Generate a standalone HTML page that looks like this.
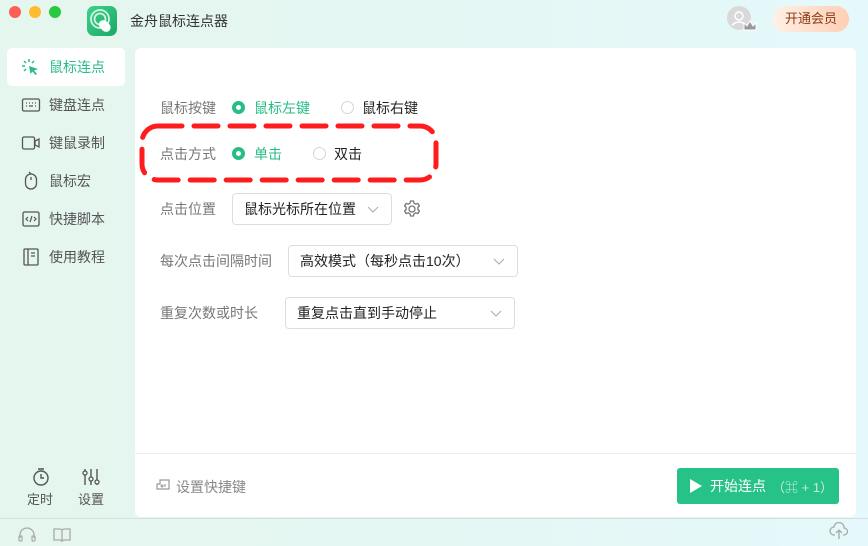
<!DOCTYPE html>
<html><head><meta charset="utf-8"><style>
*{margin:0;padding:0;box-sizing:border-box}
body{width:868px;height:546px;overflow:hidden;font-family:"Liberation Sans","Noto Sans CJK SC",sans-serif;background:linear-gradient(90deg,#e5f6ee 0%,#e5f7f3 50%,#e5f8fb 100%);position:relative;font-size:14px;color:#222}
.abs{position:absolute}
.t{line-height:16px}
.dot{width:12px;height:12px;border-radius:50%;top:6px}
.nav{position:absolute;left:7px;width:118px;height:38px;display:flex;align-items:center;padding-left:14px;gap:8px;color:#555;font-size:14px}
.nav svg{width:20px;height:20px}
.card{left:135px;top:48px;width:721px;height:469px;background:#fff;border-radius:6px}
.lbl{color:#777;font-size:14px}
.radio{width:13px;height:13px;border-radius:50%;border:1px solid #d5d5d5;background:#fff}
.radio.on{border:4px solid #27bd85}
.sel{position:absolute;height:32px;border:1px solid #ddd;border-radius:4px;padding-left:11px;display:flex;align-items:center;font-size:14px;color:#222}
.chev{position:absolute;right:12px;top:9px}
</style></head><body>
<div class="abs dot" style="left:9px;background:#fe5f57"></div>
<div class="abs dot" style="left:29px;background:#febc2e"></div>
<div class="abs dot" style="left:49px;background:#28c840"></div>
<div class="abs" style="left:87px;top:6px;width:30px;height:30px;border-radius:7px;background:linear-gradient(135deg,#3ed28a,#18a864)">
<svg width="30" height="30" viewBox="0 0 30 30"><circle cx="13" cy="13" r="9" fill="none" stroke="#fff" stroke-width="1.8" opacity=".8"/><circle cx="13" cy="13" r="5.5" fill="none" stroke="#fff" stroke-width="1.8" opacity=".8"/><rect x="13" y="14" width="9" height="13" rx="4.5" transform="rotate(-45 17 20)" fill="#fff"/></svg></div>
<div class="abs" style="left:130px;top:11px;font-size:14px;color:#333">金舟鼠标连点器</div>
<div class="abs" style="left:727px;top:6px;width:24px;height:24px;border-radius:50%;background:#d9d9d9">
<svg width="24" height="24"><circle cx="12" cy="10" r="4" fill="none" stroke="#fff" stroke-width="1.5"/><path d="M5 19 Q12 13 19 19" fill="none" stroke="#fff" stroke-width="1.5"/></svg></div>
<svg class="abs" style="left:743px;top:20px" width="14" height="11"><path d="M1 3l3 3 3-5 3 5 3-3v7H1z" fill="#999" stroke="#fff" stroke-width="1"/></svg>
<div class="abs" style="left:773px;top:6px;width:76px;height:26px;border-radius:13px;background:linear-gradient(90deg,#fff0e6,#ffcfb4);color:#8a3b12;font-size:13px;text-align:center;line-height:26px">开通会员</div>

<div class="abs" style="left:7px;top:48px;width:118px;height:38px;background:#fff;border-radius:5px"></div>
<div class="nav" style="top:48px;color:#27bd85"><svg viewBox="0 0 20 20"><path d="M8 9 L17 12 L13 13.5 L16 17 L14.5 18 L11.5 14.5 L9.5 17 Z" fill="#27bd85"/><path d="M8 2v3M3 4l2 2M1 9h3M3 14l2-2M13 4l-2 2" stroke="#27bd85" stroke-width="1.5"/></svg>鼠标连点</div>
<div class="nav" style="top:86px"><svg viewBox="0 0 20 20"><rect x="1.5" y="4" width="17" height="12" rx="1.5" fill="none" stroke="#555" stroke-width="1.3"/><path d="M5 8h1M8 8h1M11 8h1M14 8h1M5 11h1M8 11h4M14 11h1" stroke="#555" stroke-width="1.3"/></svg>键盘连点</div>
<div class="nav" style="top:124px"><svg viewBox="0 0 20 20"><rect x="1.5" y="4" width="12" height="12" rx="1.5" fill="none" stroke="#555" stroke-width="1.3"/><path d="M14 8l4-2v8l-4-2z" fill="none" stroke="#555" stroke-width="1.3"/></svg>键鼠录制</div>
<div class="nav" style="top:162px"><svg viewBox="0 0 20 20"><rect x="4.5" y="3" width="11" height="15" rx="5.5" fill="none" stroke="#555" stroke-width="1.3"/><path d="M10 6v3M8 1l2 2" stroke="#555" stroke-width="1.3"/></svg>鼠标宏</div>
<div class="nav" style="top:200px"><svg viewBox="0 0 20 20"><rect x="2" y="3" width="16" height="14" rx="1.5" fill="none" stroke="#555" stroke-width="1.3"/><path d="M7 8l-2 2 2 2M13 8l2 2-2 2M11 7l-2 6" fill="none" stroke="#555" stroke-width="1.2"/></svg>快捷脚本</div>
<div class="nav" style="top:238px"><svg viewBox="0 0 20 20"><rect x="3" y="2" width="14" height="16" rx="1" fill="none" stroke="#555" stroke-width="1.3"/><path d="M7 2v16M10 6h4M10 9h4" stroke="#555" stroke-width="1.3"/></svg>使用教程</div>

<svg class="abs" style="left:31px;top:467px" width="20" height="20" viewBox="0 0 20 20"><circle cx="10" cy="11" r="7" fill="none" stroke="#555" stroke-width="1.4"/><path d="M10 7v4h3M7 2h6" stroke="#555" stroke-width="1.4" fill="none"/></svg>
<div class="abs" style="left:27px;top:489px;font-size:13px;color:#555">定时</div>
<svg class="abs" style="left:81px;top:467px" width="20" height="20" viewBox="0 0 20 20"><path d="M4 2v16M10 2v16M16 2v16" stroke="#555" stroke-width="1.4"/><circle cx="4" cy="6" r="2" fill="#e5f6ee" stroke="#555" stroke-width="1.3"/><circle cx="10" cy="12" r="2" fill="#e5f6ee" stroke="#555" stroke-width="1.3"/><circle cx="16" cy="15" r="2" fill="#e5f6ee" stroke="#555" stroke-width="1.3"/></svg>
<div class="abs" style="left:78px;top:489px;font-size:13px;color:#555">设置</div>

<div class="abs" style="left:0;top:518px;width:868px;height:1px;background:#d8dedb"></div>
<svg class="abs" style="left:17px;top:526px" width="20" height="18" viewBox="0 0 20 18"><path d="M3 12V9a7 7 0 0 1 14 0v3" fill="none" stroke="#aaa" stroke-width="1.3"/><rect x="2" y="10" width="3" height="5" rx="1" fill="none" stroke="#aaa" stroke-width="1.2"/><rect x="15" y="10" width="3" height="5" rx="1" fill="none" stroke="#aaa" stroke-width="1.2"/></svg>
<svg class="abs" style="left:52px;top:527px" width="20" height="16" viewBox="0 0 20 16"><path d="M2 2h6a2 2 0 0 1 2 2v11a2 2 0 0 0-2-2H2zM18 2h-6a2 2 0 0 0-2 2v11a2 2 0 0 1 2-2h6z" fill="none" stroke="#aaa" stroke-width="1.3"/></svg>
<svg class="abs" style="left:829px;top:522px" width="20" height="18" viewBox="0 0 20 18"><path d="M6 13H5a4 4 0 0 1 0-8 5 5 0 0 1 10 1 3.5 3.5 0 0 1 0 7h-1M10 8v9M7 11l3-3 3 3" fill="none" stroke="#aaa" stroke-width="1.3"/></svg>

<div class="abs card"></div>
<div class="abs" style="left:135px;top:453px;width:721px;height:1px;background:#eee"></div>

<div class="abs lbl t" style="left:160px;top:100px">鼠标按键</div>
<div class="abs radio on" style="left:232px;top:101px"></div>
<div class="abs t" style="left:254px;top:100px;color:#27bd85">鼠标左键</div>
<div class="abs radio" style="left:341px;top:101px"></div>
<div class="abs t" style="left:362px;top:100px">鼠标右键</div>

<div class="abs lbl t" style="left:160px;top:146px">点击方式</div>
<div class="abs radio on" style="left:232px;top:147px"></div>
<div class="abs t" style="left:254px;top:146px;color:#27bd85">单击</div>
<div class="abs radio" style="left:313px;top:147px"></div>
<div class="abs t" style="left:334px;top:146px">双击</div>
<svg class="abs" style="left:138px;top:123px" width="302" height="60"><rect x="4" y="3" width="294" height="54" rx="16" fill="none" stroke="#fe1d1d" stroke-width="5" stroke-dasharray="24 12" stroke-linecap="round"/></svg>

<div class="abs lbl t" style="left:160px;top:201px">点击位置</div>
<div class="sel" style="left:232px;top:193px;width:160px">鼠标光标所在位置<svg class="chev" width="12" height="12"><path d="M1 4l5 5 5-5" fill="none" stroke="#aaa" stroke-width="1"/></svg></div>
<svg class="abs" style="left:402px;top:199px" width="20" height="20" viewBox="0 0 20 20"><circle cx="10" cy="10" r="3" fill="none" stroke="#777" stroke-width="1.3"/><path d="M8.5 2h3l.5 2.2 1.8 1 2.1-.8 1.5 2.6-1.6 1.5v2l1.6 1.5-1.5 2.6-2.1-.8-1.8 1-.5 2.2h-3l-.5-2.2-1.8-1-2.1.8-1.5-2.6 1.6-1.5v-2L2.6 7l1.5-2.6 2.1.8 1.8-1z" fill="none" stroke="#777" stroke-width="1.3" stroke-linejoin="round"/></svg>

<div class="abs lbl t" style="left:160px;top:253px">每次点击间隔时间</div>
<div class="sel" style="left:288px;top:245px;width:230px">高效模式（每秒点击10次）<svg class="chev" width="12" height="12"><path d="M1 4l5 5 5-5" fill="none" stroke="#aaa" stroke-width="1"/></svg></div>

<div class="abs lbl t" style="left:160px;top:305px">重复次数或时长</div>
<div class="sel" style="left:285px;top:297px;width:230px">重复点击直到手动停止<svg class="chev" width="12" height="12"><path d="M1 4l5 5 5-5" fill="none" stroke="#aaa" stroke-width="1"/></svg></div>

<svg class="abs" style="left:155px;top:478px" width="16" height="16" viewBox="0 0 16 16"><path d="M5 2h9v9H2V6h3z" fill="none" stroke="#999" stroke-width="1.2"/><path d="M10 6v2H6M7.5 6.5L6 8l1.5 1.5" fill="none" stroke="#999" stroke-width="1.1"/></svg>
<div class="abs t" style="left:176px;top:479px;color:#888">设置快捷键</div>

<div class="abs" style="left:677px;top:468px;width:162px;height:36px;background:#27c287;border-radius:3px;color:#fff;display:flex;align-items:center">
<svg style="margin-left:12px" width="14" height="16"><path d="M1 1l12 7-12 7z" fill="#fff"/></svg>
<span style="margin-left:7px;font-size:14px">开始连点</span><span style="margin-left:6px;font-size:13px;color:#bfeedd">（⌘ + 1）</span></div>
</body></html>
